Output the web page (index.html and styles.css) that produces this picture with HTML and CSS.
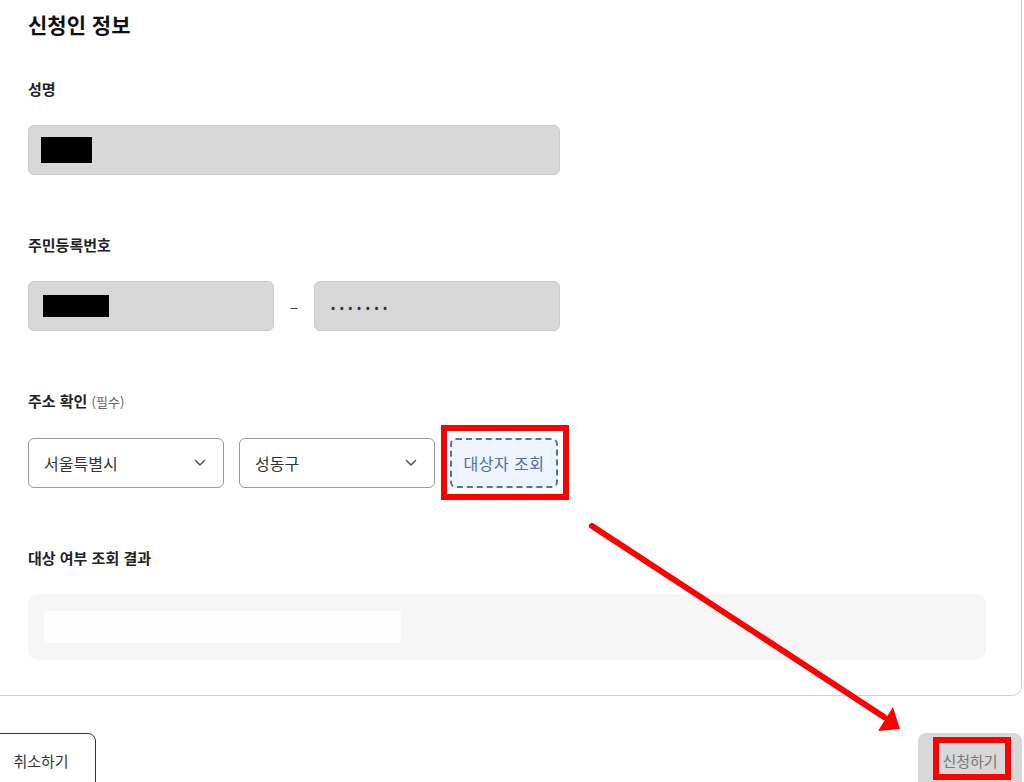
FILE: index.html
```html
<!DOCTYPE html>
<html lang="ko">
<head>
    <meta charset="UTF-8">
    <meta name="viewport" content="width=device-width, initial-scale=1.0">
    <title>신청인 정보</title>
    <link rel="stylesheet" href="styles.css">
</head>
<body>
    <div class="page">
        <section class="card">
            <h2 class="card-title">신청인 정보</h2>

            <div class="field">
                <label class="field-label">성명</label>
                <div class="input input-full">
                    <span class="masked masked-name"></span>
                </div>
            </div>

            <div class="field">
                <label class="field-label">주민등록번호</label>
                <div class="rrn-row">
                    <div class="input input-half">
                        <span class="masked masked-rrn"></span>
                    </div>
                    <span class="rrn-dash">–</span>
                    <div class="input input-half">
                        <span class="dots">•••••••</span>
                    </div>
                </div>
            </div>

            <div class="field">
                <label class="field-label">주소 확인 <span class="required">(필수)</span></label>
                <div class="address-row">
                    <div class="select">
                        <span>서울특별시</span>
                        <svg class="chevron" width="12" height="8" viewBox="0 0 12 8"><path d="M1.5 1.5 L6 6 L10.5 1.5" fill="none" stroke="#555" stroke-width="1.5" stroke-linecap="round" stroke-linejoin="round"/></svg>
                    </div>
                    <div class="select">
                        <span>성동구</span>
                        <svg class="chevron" width="12" height="8" viewBox="0 0 12 8"><path d="M1.5 1.5 L6 6 L10.5 1.5" fill="none" stroke="#555" stroke-width="1.5" stroke-linecap="round" stroke-linejoin="round"/></svg>
                    </div>
                    <button class="btn-search highlight">대상자 조회</button>
                </div>
            </div>

            <div class="field">
                <label class="field-label">대상 여부 조회 결과</label>
                <div class="result-box">
                    <div class="result-line"></div>
                </div>
            </div>
        </section>

        <div class="actions">
            <button class="btn btn-cancel">취소하기</button>
            <button class="btn btn-submit highlight">신청하기</button>
        </div>
    </div>

    <svg class="annotation" width="1024" height="782" viewBox="0 0 1024 782">
        <line x1="592" y1="526" x2="884" y2="717" stroke="#ff0000" stroke-width="6" stroke-linecap="round"/>
        <polygon points="900,729 893,707 878,731" fill="#ff0000"/>
    </svg>
</body>
</html>
```

FILE: styles.css
```css
body {
    margin: 0;
    background-color: #fff;
    font-family: "Noto Sans CJK KR", "Noto Sans", sans-serif;
    color: #222;
    overflow: hidden;
    height: 782px;
    position: relative;
}
.page {
    margin-left: -14px;
    width: 1036px;
}
.card {
    margin-top: -20px;
    border: 1px solid #cfcfcf;
    border-radius: 10px;
    padding: 29px 35px 35px 41px;
    display: flex;
    flex-direction: column;
    gap: 59px;
}
.card-title {
    margin: 0 0 -19px 0;
    font-size: 21px;
    line-height: 28px;
    font-weight: 700;
    color: #111;
}
.field {
    display: flex;
    flex-direction: column;
    gap: 25px;
}
.field-label {
    font-size: 15px;
    line-height: 22px;
    font-weight: 700;
    color: #222;
}
.required {
    font-size: 13px;
    font-weight: 400;
    color: #666;
}
.input {
    box-sizing: border-box;
    height: 50px;
    background-color: #d8d8d8;
    border: 1px solid #cbcbcb;
    border-radius: 6px;
    display: flex;
    align-items: center;
    padding: 0 12px;
}
.input-full {
    width: 532px;
}
.input-half {
    width: 246px;
}
.masked {
    display: block;
    background-color: #000;
}
.masked-name {
    width: 51px;
    height: 26px;
}
.masked-rrn {
    width: 66px;
    height: 22px;
    margin-left: 2px;
}
.rrn-row {
    display: flex;
    align-items: center;
}
.rrn-dash {
    width: 40px;
    text-align: center;
    font-size: 15px;
    color: #444;
}
.dots {
    font-size: 12px;
    letter-spacing: 4.6px;
    color: #333;
    margin-left: 4px;
}
.address-row {
    display: flex;
    align-items: center;
    gap: 15px;
}
.select {
    box-sizing: border-box;
    width: 196px;
    height: 50px;
    border: 1px solid #9a9a9a;
    border-radius: 6px;
    background-color: #fff;
    display: flex;
    align-items: center;
    justify-content: space-between;
    padding: 0 17px 0 15px;
    font-size: 16px;
    color: #333;
}
.btn-search {
    box-sizing: border-box;
    width: 108px;
    height: 50px;
    border: 2px dashed #4a70c6;
    border-radius: 6px;
    background-color: #eef4fd;
    color: #4f6ea8;
    font-family: inherit;
    font-size: 16px;
    letter-spacing: 0.5px;
    padding: 0;
}
.result-box {
    height: 66px;
    box-sizing: border-box;
    width: 958px;
    background-color: #f6f6f6;
    border-radius: 10px;
    padding: 17px 16px;
}
.result-line {
    width: 357px;
    height: 32px;
    background-color: #fdfdfd;
}
.actions {
    margin-top: 37px;
    display: flex;
    justify-content: space-between;
}
.btn {
    box-sizing: border-box;
    height: 60px;
    font-family: inherit;
    font-size: 15px;
    border-radius: 8px;
    padding: 0 0 6px 0;
}
.btn-cancel {
    width: 110px;
    background-color: #fff;
    border: 1px solid #333;
    color: #333;
}
.btn-submit {
    width: 104px;
    background-color: #d8d8d8;
    border: none;
    color: #777;
}
.highlight {
    position: relative;
}
.highlight::after {
    content: "";
    position: absolute;
    border: 6px solid #ff0000;
    pointer-events: none;
}
.btn-search::after {
    top: -15px;
    left: -11px;
    right: -13px;
    bottom: -14px;
}
.btn-submit::after {
    top: 4px;
    left: 15px;
    width: 66px;
    height: 31px;
}
.annotation {
    position: absolute;
    top: 0;
    left: 0;
    pointer-events: none;
}
```
